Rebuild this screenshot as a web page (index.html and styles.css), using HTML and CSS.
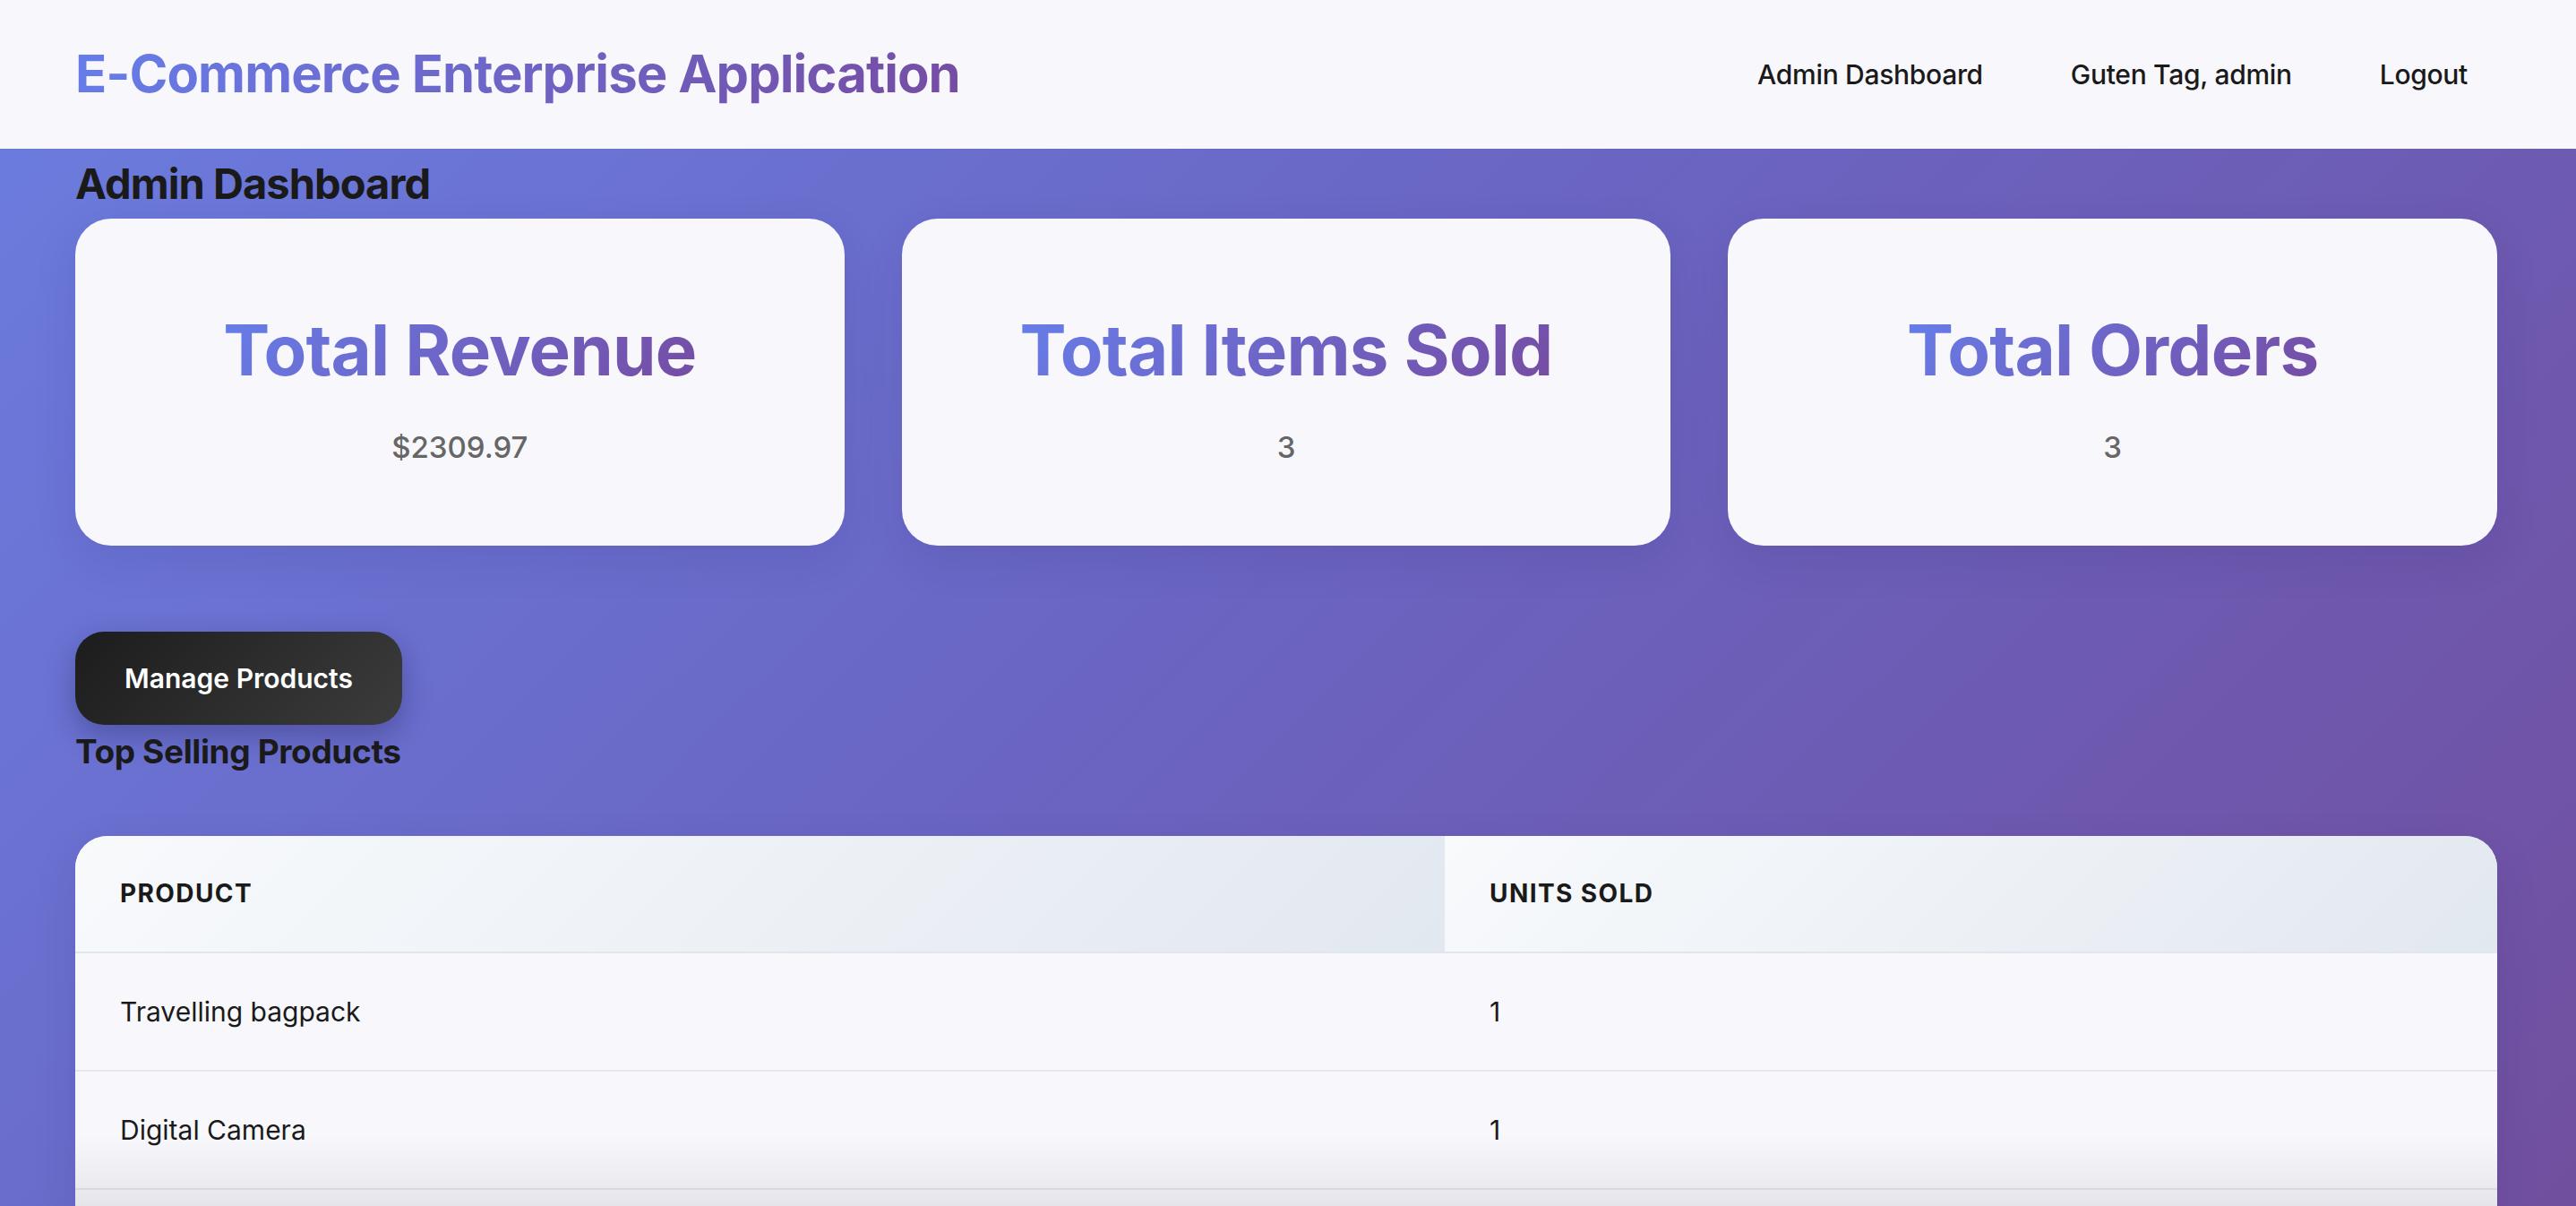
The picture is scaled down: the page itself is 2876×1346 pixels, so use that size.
FILE: index.html
```html
<!DOCTYPE html>
<html lang="en">
<head>
<meta charset="utf-8">
<title>Admin Dashboard</title>
<link rel="stylesheet" href="styles.css">
</head>
<body>
<header class="topbar">
  <h1 class="brand">E-Commerce Enterprise Application</h1>
  <nav class="nav">
    <a class="nav-link" href="#">Admin Dashboard</a>
    <span class="nav-link">Guten Tag, admin</span>
    <a class="nav-link" href="#">Logout</a>
  </nav>
</header>
<main class="main">
  <h2 class="page-title">Admin Dashboard</h2>
  <section class="stats">
    <div class="stat-card">
      <h3 class="stat-title">Total Revenue</h3>
      <p class="stat-value">$2309.97</p>
    </div>
    <div class="stat-card">
      <h3 class="stat-title">Total Items Sold</h3>
      <p class="stat-value">3</p>
    </div>
    <div class="stat-card">
      <h3 class="stat-title">Total Orders</h3>
      <p class="stat-value">3</p>
    </div>
  </section>
  <a class="btn-dark" href="#">Manage Products</a>
  <h3 class="section-title">Top Selling Products</h3>
  <div class="table-wrap">
    <table class="table">
      <thead>
        <tr><th class="col-product">Product</th><th>Units Sold</th></tr>
      </thead>
      <tbody>
        <tr><td>Travelling bagpack</td><td>1</td></tr>
        <tr><td>Digital Camera</td><td>1</td></tr>
        <tr class="row-empty"><td></td><td></td></tr>
      </tbody>
    </table>
  </div>
</main>
<div class="bottom-fade"></div>
</body>
</html>
```
FILE: styles.css
```css
* { box-sizing: border-box; }
html, body { margin: 0; padding: 0; }
body {
  font-family: Inter, "Noto Sans", "Liberation Sans", sans-serif;
  color: #1a1a1a;
  min-height: 100vh;
  background: linear-gradient(135deg, #6b7ddf 0%, #6a66c4 45%, #714f9f 100%);
  background-attachment: fixed;
}
.topbar {
  height: 166px;
  background: #f8f8fc;
  display: flex;
  align-items: center;
  justify-content: space-between;
  padding: 0 84px;
}
.brand {
  margin: 0;
  font-size: 58px;
  font-weight: 700;
  letter-spacing: -0.016em;
  background: linear-gradient(135deg, #667eea 0%, #764ba2 100%);
  -webkit-background-clip: text;
  background-clip: text;
  color: transparent;
  line-height: 1.2;
}
.nav {
  display: flex;
  align-items: center;
  gap: 24px;
}
.nav-link {
  font-size: 30px;
  font-weight: 500;
  letter-spacing: -0.01em;
  color: #1a1a1a;
  text-decoration: none;
  padding: 12px 37px;
}
.main {
  padding: 10px 88px 0 84px;
}
.page-title {
  margin: 0 0 10px;
  font-size: 47px;
  font-weight: 700;
  line-height: 58px;
  letter-spacing: -0.02em;
  color: #1a1a1a;
}
.stats {
  display: grid;
  grid-template-columns: repeat(3, 1fr);
  gap: 64px;
}
.stat-card {
  background: #f8f8fc;
  border-radius: 40px;
  height: 365px;
  padding: 99px 20px 0;
  text-align: center;
  box-shadow: 0 16px 48px rgba(40, 30, 110, 0.12);
}
.stat-title {
  margin: 0;
  font-size: 78px;
  font-weight: 700;
  line-height: 96px;
  letter-spacing: -0.01em;
  background: linear-gradient(135deg, #667eea 0%, #764ba2 100%);
  -webkit-background-clip: text;
  background-clip: text;
  color: transparent;
  display: inline-block;
}
.stat-value {
  margin: 36px 0 0;
  font-size: 33px;
  font-weight: 500;
  line-height: 48px;
  color: #666;
}
.btn-dark {
  display: inline-block;
  margin-top: 96px;
  height: 104px;
  width: 365px;
  line-height: 104px;
  text-align: center;
  border-radius: 32px;
  background: linear-gradient(135deg, #1c1c1c 0%, #3c3c3c 100%);
  color: #fff;
  font-size: 30px;
  font-weight: 600;
  text-decoration: none;
  box-shadow: 0 12px 32px rgba(20, 20, 60, 0.3);
}
.section-title {
  margin: 8px 0 72px;
  font-size: 37px;
  font-weight: 700;
  line-height: 44px;
  letter-spacing: -0.01em;
  color: #1a1a1a;
}
.table-wrap {
  background: #f8f8fc;
  border-radius: 36px;
  overflow: hidden;
  box-shadow: 0 16px 48px rgba(40, 30, 110, 0.12);
}
.table {
  width: 100%;
  border-collapse: collapse;
}
.table th {
  text-align: left;
  font-size: 28px;
  font-weight: 700;
  text-transform: uppercase;
  letter-spacing: 0.05em;
  line-height: 33px;
  padding: 48px 50px;
  color: #1a1a1a;
  background: linear-gradient(135deg, #f8fafc 0%, #e2e8f0 100%);
  border-bottom: 2px solid #e3e5ec;
}
.table th.col-product { width: 1529px; }
.table td {
  font-size: 30px;
  line-height: 36px;
  padding: 47px 50px;
  color: #1a1a1a;
  border-bottom: 2px solid #e6e6ec;
}
.table .row-empty td { height: 132px; }
.bottom-fade {
  position: fixed;
  left: 84px;
  right: 88px;
  bottom: 0;
  height: 80px;
  background: linear-gradient(180deg, rgba(0,0,0,0) 0%, rgba(60,60,80,0.1) 100%);
  pointer-events: none;
}
```
